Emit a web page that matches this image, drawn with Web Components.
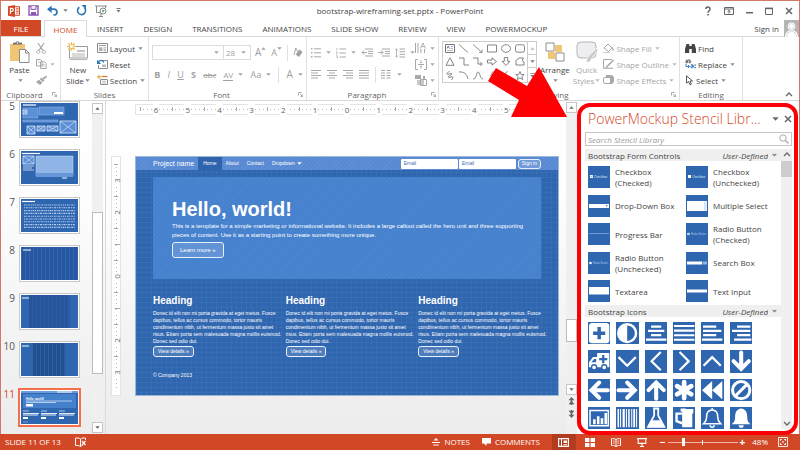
<!DOCTYPE html>
<html lang="en">
<head>
<meta charset="utf-8">
<title>bootstrap-wireframing-set.pptx - PowerPoint</title>
<style>
html,body{height:100%;margin:0}
body{font:8px/11px "Open Sans","Noto Sans",sans-serif;color:#444;background:#fff;overflow:hidden}
</style>
</head>
<body>
<app-window></app-window>
<script>
const CTRL = `
*{box-sizing:border-box}
button,select,input{font:inherit;color:inherit;background:none;border:0;margin:0;padding:0;border-radius:0;outline:0}
button{display:inline-flex;align-items:center;justify-content:center;white-space:nowrap}
a{color:inherit;text-decoration:none}
h1,h2,h3,p,ol,ul{margin:0;padding:0;font-weight:inherit;font-size:inherit;list-style:none}
`;
function define(name, css, html, setup) {
  customElements.define(name, class extends HTMLElement {
    constructor() { super(); this.attachShadow({mode: 'open'}); }
    connectedCallback() {
      if (this.shadowRoot.firstChild) return;
      const t = document.createElement('template');
      t.innerHTML = `<style>${CTRL}${css}</style>` + (typeof html === 'function' ? html(this) : html);
      this.shadowRoot.append(t.content.cloneNode(true));
      if (setup) setup(this, this.shadowRoot);
    }
  });
}

/* ---------- icons: [viewBox width, height, markup] ---------- */
const S = (d, w = 1, extra = '') => `<path d="${d}" fill="none" stroke="currentColor" stroke-width="${w}" ${extra}/>`;
const F = (d, f = 'currentColor') => `<path d="${d}" fill="${f}"/>`;
const ICONS = {
  ppt: [12,12, F('M0 1.2 7 0v12L0 10.8z','#d24726') + '<path d="M7 1.7h4.5v8.6H7" fill="#fff" stroke="#d24726"/><path d="M8 3.4h2.6M8 5h2.6M8 6.6h2.6M8 8.2h2.6" stroke="#d24726" stroke-width=".8"/><path d="M2.4 9V3.4h1.4a1.5 1.5 0 0 1 0 3H2.4" fill="none" stroke="#fff" stroke-width="1.1"/>'],
  save: [11,11, '<path d="M1 1h9v9H1z" fill="#fff" stroke="#8a55b5" stroke-width="1.4"/><path d="M3 1v3.4h5V1" fill="#f3eaf9" stroke="#8a55b5"/><path d="M3 10V7h5v3" fill="#8a55b5"/>'],
  undo: [12,11, S('M2 4.2h5a3 3 0 0 1 1 5.8L6.4 10',1.7) + F('M0 4.2 4.6.4v7.6z')],
  redo: [11,11, S('M3.4 2.2A4 4 0 1 0 8.6 3',1.6) + F('M5.5 0H10v4.6z')],
  show: [13,12, '<path d="M0 1h12M1.5 1v6.5h4M10.5 1v2" fill="none" stroke="#8a8a8a"/><path d="M6 8v3.5M4 11.5h4" stroke="#8a8a8a"/><circle cx="8" cy="6" r="3" fill="#fff" stroke="#7c8a80"/><path d="M7.2 4.4 9.8 6 7.2 7.6z" fill="#4c9a63"/>'],
  caret: [5,3, F('M.3.2h4.4L2.5 2.8z')],
  caretUp: [5,3, F('M.3 2.8h4.4L2.5.2z')],
  caretBig: [7,4, F('M.3.2h6.4L3.5 3.8z')],
  chevSmall: [5,4, S('M.7.8l1.800 1.900L4.300.8',1.100)],
  qat: [5,5, F('M.5 0h4v.9h-4zM.5 2h4L2.5 4.6z')],
  help: [8,10, S('M1.8 3a2.1 2.1 0 1 1 3.5 1.6C4.4 5.3 4 5.6 4 6.8',1.5) + F('M3.2 8h1.6v1.6H3.2z')],
  ribbonopt: [10,8, S('M.5.5h9v7h-9zM.5 2h9') + S('M5 6.6V3.6M3.5 4.8 5 3.4l1.5 1.4')],
  min: [7,8, F('M0 5h7v1.5H0z')],
  max: [8,8, S('M.5 1.5h7v6h-7z') + F('M0 .6h8v1.6H0z')],
  close: [8,8, S('M1 1l6 6M7 1 1 7',1.5)],
  avatar: [15,17, F('M0 0h15v17H0z','#b5b5b5') + '<circle cx="7.5" cy="6.400" r="3.800" fill="#fff"/><path d="M1 17c0-4 2-6 4.500-6.600h4C12 11 14 13 14 17z" fill="#fff"/><circle cx="7.500" cy="6.400" r="2.900" fill="#c9c9c9"/><path d="M2.400 17c0-3.500 1.600-5 3.600-5.400h3c2 .4 3.600 1.900 3.600 5.400z" fill="#c9c9c9"/><circle cx="7.500" cy="6.400" r="2.400" fill="#fff"/><path d="M3 17c0-3 1.400-4.500 3.400-5h2.200c2 .5 3.400 2 3.400 5z" fill="#fff"/>'],
  paste: [21,22, F('M1 3h15v17H1z','#f0c674') + F('M4 3.5h9V1.8h-2.4a2.2 2.2 0 0 0-4.2 0H4z','#6b6b6b') + '<circle cx="8.5" cy="1.9" r=".8" fill="#fff"/><path d="M10.5 8.5h6l3.5 3.5v9.5h-9.5z" fill="#fff" stroke="#8c8c8c"/><path d="M16.5 8.5V12H20" fill="none" stroke="#8c8c8c"/>'],
  cut: [10,11, S('M2 0l4.8 7.4M8 0 3.2 7.4',1.1) + S('M2.2 7.2a1.6 1.6 0 1 0 .1 0zM7.8 7.2a1.6 1.6 0 1 0 .1 0z')],
  copy: [11,10, '<path d="M.5.5h4L6 2v5H.5zM4.500 2.800h4l1.700 1.700v5H4.500z" fill="#fff" stroke="currentColor"/><path d="M6 5.500h2.600M6 7.200h2.600M2 3h2" stroke="currentColor" stroke-width=".7"/>'],
  brush: [11,10, F('M10.500.4 11 2 8 4.600 6.500 3z') + F('M5.600 2.500 8.500 5.600 6.800 7 3.800 4.200z') + F('M3 4.800 6.400 7.800 4 10 0 7z')],
  newslide: [21,20, '<path d="M2.500 4.500h18v11.500h-18z" fill="#fff" stroke="#9b9b9b"/><path d="M2.500 17.500h18" stroke="#b9b9b9"/><path d="M10 8h8v2h-8z" fill="#c4c4c4"/><path d="M5 12h13M5 14h13" stroke="#b5b5b5"/><path d="M4.500 0v9M0 4.500h9M1.300 1.300l6.400 6.400M7.700 1.300 1.300 7.700" stroke="#eebc5c" stroke-width="1.300"/><circle cx="4.500" cy="4.500" r="1.600" fill="#fff"/>'],
  layout: [11,10, '<path d="M.5.5h10v9H.5z" fill="#fff" stroke="#8c8c8c"/><path d="M2 2h7v1H2z" fill="#9a9a9a"/><path d="M2 4.300h3.500V8H2z" fill="#b0b0b0"/><path d="M6.500 4.800H9M6.500 6.300H9M6.500 7.800H9" stroke="#999" stroke-width=".8"/>'],
  reset: [11,10, '<path d="M3.500 1.500h7v8h-9V6" fill="#fff" stroke="#8c8c8c"/><path d="M5 5.500h4v2.500H5z" fill="#bbb"/><path d="M1 3.500C3 .5 5.500 1 7 3.500" fill="none" stroke="#2f76b5" stroke-width="1.300"/><path d="M0 .8v4.200h4.200z" fill="#2f76b5"/>'],
  section: [11,10, '<path d="M0 1.800h4M2 0v4" stroke="#e8b04c" stroke-width="1.200"/><path d="M4.500 1.500h6" stroke="#e07b39" stroke-width="1.300"/><path d="M3.500 4.500h7v5h-7z" fill="#fff" stroke="#8c8c8c"/><path d="M5 6.300h4M5 8h4" stroke="#aaa" stroke-width=".8"/>'],
  launcher: [5,5, S('M.5 3.500V.5h3M2 2l2.500 2.500M4.500 2.600v1.900H2.600',.8)],
  eraser: [10,10, S('M1 7 2.800 0 5 4',.9) + F('M6.500 1.500 9.500 4 6 9 2.600 6.500z')],
  bullets: [10,10, F('M0 0h1.500v1.500H0zM0 4h1.500v1.500H0zM0 8h1.500v1.500H0z') + S('M3 .8h7M3 4.800h7M3 8.800h7')],
  numbers: [10,10, S('M.8 0v2.200M0 4h1.500L0 5.800h1.500M0 7.800h1.500v2H0',.7) + S('M3.500 1h6.500M3.500 5h6.500M3.500 9h6.500')],
  outdent: [12,9, S('M4 1h8M7 3.400h5M7 5.600h5M4 8h8') + S('M1 4.500h5M3 2.500l-2 2 2 2')],
  indent: [12,9, S('M4 1h8M7 3.400h5M7 5.600h5M4 8h8') + S('M0 4.500h5M3 2.500l2 2-2 2')],
  spacing: [10,10, S('M4.500 1h5.500M4.500 3.700h5.500M4.500 6.300h5.500M4.500 9h5.500') + S('M1.500.8v8.400M0 2.500 1.500.8 3 2.500M0 7.500l1.500 1.700L3 7.500',.8)],
  left: [11,9, S('M0 .5h10M0 3h7M0 5.500h10M0 8h7')],
  center: [11,9, S('M0 .5h10M2 3h6M0 5.500h10M2 8h6')],
  right: [11,9, S('M0 .5h10M3 3h7M0 5.500h10M3 8h7')],
  justify: [11,9, S('M0 .5h10M0 3h10M0 5.500h10M0 8h10')],
  columns: [11,9, S('M0 .5h4M0 3h4M0 5.500h4M0 8h4M5.500.5h4M5.500 3h4M5.500 5.500h4M5.500 8h4')],
  textdir: [12,11, S('M.5 0v10M3 0v10M6 6v4M9.500 6v4') + S('M5.500 5.500 8 0l2.500 5.500M6.500 3.600h3',.9)],
  aligntext: [12,11, S('M3 .5H.5v10H3M9 .5h2.500v10H9M3 5.500h6') + S('M6 1v3M4.800 3 6 4.200 7.200 3M6 10V7M4.800 8 6 6.800 7.200 8',.8)],
  smartart: [12,11, F('M0 0h6v4H0z') + F('M2 5h7v5H2z','#c9c9c9') + S('M5.500 4.500h6v6h-6z') + F('M8 1h2v3H8z')],
  textbox: [10,9, '<path d="M.5.5h9v8h-9z" fill="#fff" stroke="#777"/><path d="M2 4.500 3.200 2l1.200 2.500" fill="none" stroke="#3f78b8" stroke-width=".9"/><path d="M5.500 2.500H8M5.500 4.500H8M2 6.500h6" stroke="#999" stroke-width=".7"/>'],
  line: [10,9, S('M0 .5l9 8',.8)], arrowline: [10,9, S('M0 .5l9 8M9 5.500v3H6',.8)],
  rect: [10,9, S('M.5 1h9v7h-9z',.9)], oval: [10,9, '<ellipse cx="5" cy="4.500" rx="4.500" ry="3.800" fill="none" stroke="currentColor" stroke-width=".9"/>'],
  rrect: [10,9, '<rect x=".5" y=".8" width="9" height="7.400" rx="1.800" fill="none" stroke="currentColor" stroke-width=".9"/>'],
  tri: [10,9, S('M5 .8 9 8.300H1z',.9)], elbow: [10,9, S('M0 1h5v7h5',.9)], elbowarrow: [10,9, S('M0 1h5v6h4M7.300 5 9.300 7l-2 2',.9)],
  rarrow: [10,9, S('M.5 3h4.500V.8l4.500 3.700L5 8.200V6H.5z',.9)], darrow: [10,9, S('M3.300.5h3.400v3.800h2.200L5 8.500 1.100 4.300h2.200z',.9)],
  pent: [10,9, S('M1 8V3.500L4 1h4.500L7 3.500 9 5v3z',.9)], scribble: [10,9, S('M4.500.5C1 2 1 4 4 3s4 0 1 1.500S3 7 6 6s2 1 .5 3',.9)],
  arc: [10,9, S('M0 1c5-.5 8 2 9 7',.9)], curve: [10,9, S('M0 8c4 0 3-7 5-7s2 7 5 7',.9)], star: [10,9, S('M5 .6l1.200 2.800 3 .2-2.300 2 .8 3L5 6.900 2.300 8.600l.8-3-2.300-2 3-.2z',.9)],
  brace: [10,9, S('M6.500.5C4 .5 5.500 4.500 3.500 4.500 5.500 4.500 4 8.500 6.500 8.500',.9)],
  more: [5,5, F('M.3 0h4.400v.8H.3zM.3 1.900h4.400L2.500 4.500z')],
  arrange: [20,20, F('M10 3h7v7h-7zM3 10h7v7H3z','#f0c674') + '<path d="M1 1h8v8H1zM11 11h8v8h-8z" fill="#fff" stroke="#8c8c8c"/>'],
  quick: [22,22, '<rect x="1" y="1" width="19" height="16" rx="4" fill="#eeedf1" stroke="#b4b4b8"/><path d="M21 7 12 15.500 10 21c3 1 5-.5 5.500-3.500L22 9z" fill="#c9c9cd" stroke="#fff" stroke-width=".7"/>'],
  fill: [11,10, S('M1 5l4-4 4 4-3.500 3.500z') + F('M8.800 3.500c2 1.500 2 3 1.400 5C9 8 9.600 6 8.800 3.500z') + F('M0 9h7v1H0z','#ccc')],
  outline: [11,10, S('M9 .5H.5v9H6') + S('M10.500 1 4 7.500 3 9',1.500) + F('M0 8.600h10v1.400H0z','#bbb')],
  effects: [11,10, F('M3 0h6l2 2v5L9 9H5L2 8z','#a9a9a9') + '<rect x=".5" y="2.500" width="7" height="6" rx="1.500" fill="#fff" stroke="#a9a9a9"/>'],
  find: [11,9, F('M1.500 0h2.800v2h2.400V0h2.800l1.500 5v4H6.800V5H4.200v4H0V5z')],
  replace: [11,10, '<path d="M.8 1.200h1.600v2.600H1a.9.9 0 0 1 0-1.500h1.400M4 0v3.800h1a1.200 1.200 0 0 0 0-2.300H4" fill="none" stroke="#555" stroke-width=".9"/><path d="M6 5.700h1.500v3H6.200a.9.9 0 0 1 0-1.600h1.300M11 6H9.400a1.400 1.400 0 0 0 0 2.700H11M1 5v2.500h3M3 6l1.500 1.500L3 9" fill="none" stroke="#2f6cb0" stroke-width=".9"/>'],
  select: [9,11, S('M1.500.8v7.400l2-1.700 1.500 3.300 1.300-.6L5 6h2.500z',.9)],
  chevUp: [8,5, S('M1 4l3-3 3 3',1.300)], chevDown: [8,5, S('M1 1l3 3 3-3',1.300)],
  dblUp: [7,8, F('M3.500 0 6.500 3.200H.5zM3.500 4 6.500 7.200H.5z') + F('M2.700 3h1.600v5H2.700z')],
  dblDown: [7,8, F('M3.500 8 .5 4.800h6zM3.500 4 .5.8h6z') + F('M2.700 0h1.600v5H2.700z')],
  mag: [10,10, '<circle cx="4" cy="4" r="3.200" fill="none" stroke="currentColor"/>' + S('M6.300 6.300l3.200 3.200',1.400)],
  spell: [11,10, S('M5.500 2C4 .8 2 .8.500 1v7.500c2-.2 3.500 0 5 1 .8-.6 1.500-.8 2-1M5.500 2v7.500M5.500 2C7 .8 9 .8 10.500 1v2') + S('M7 4l3.500 4M10.500 4 7 8',1.200)],
  notes: [8,8, F('M4 0l2.500 2.500h-5z') + S('M0 4.500h8M1.200 7h5.600',1.200)],
  comments: [9,8, F('M0 0h9v5.500H4.500V8L2 5.500H0z')],
  normal: [11,9, S('M.6.6h9.800v7.800H.6z',1.200) + F('M3 0h1v9H3z') + F('M5.500 2.500H9V5H5.500zM5.500 6.200H9v1H5.500z')],
  sorter: [10,9, F('M0 0h4.400v4H0zM5.600 0H10v4H5.600zM0 5h4.400v4H0zM5.600 5H10v4H5.600z')],
  reading: [10,9, S('M5 1.500C3.500.5 2 .5.500.8v6.700C2 7.300 3.500 7.500 5 8.500c1.500-1 3-1.200 4.500-1V.8C8 .5 6.500.5 5 1.500v7') + S('M1.800 3h2M1.800 5h2M6.300 3h2M6.300 5h2',.8)],
  slideshow: [10,9, S('M0 .6h10M1.200.6v4.800h7.600V.6M5 5.400v3M3 8.500h4',1.100)],
  fit: [10,10, S('M.5.5h9v9h-9z',.9) + F('M2 2h2.300L2 4.300zM8 2v2.300L5.700 2zM2 8V5.700L4.300 8zM8 8H5.700L8 5.700z') + F('M4.300 4.300h1.400v1.400H4.300z')],
  /* stencil glyphs, white on a blue tile */
  plusbox: [22,22, F('M4 1h14a3 3 0 0 1 3 3v14a3 3 0 0 1-3 3H4a3 3 0 0 1-3-3V4a3 3 0 0 1 3-3z','#fff') + '<path d="M11 5v12M5 11h12" stroke="#2f66b0" stroke-width="3.400"/>'],
  adjust: [22,22, '<circle cx="11" cy="11" r="8.800" fill="none" stroke="#fff" stroke-width="2.400"/><path d="M11 3a8 8 0 0 0 0 16z" fill="#fff"/>'],
  gcenter: [22,22, S('M6 4.500h10M3 8.700h16M6 12.900h10M1 17.300h20',2.200)],
  gjustify: [22,22, S('M1 4h20M1 8.500h20M1 13h20M1 17.500h20',2)],
  gleft: [22,22, S('M2 4.500h13M2 8.700h18M2 12.900h13M1 17.300h20',2.200)],
  gright: [22,22, S('M7 4.500h13M2 8.700h18M7 12.900h13M4 17.300h17',2.200)],
  ambulance: [22,22, '<path d="M9 3h12v14H1v-5l4-5h4z" fill="#fff"/><path d="M3.400 12 6 8.800h2V12z" fill="#2f66b0"/><path d="M15 5v8M11 9h8" stroke="#2f66b0" stroke-width="2.200"/><circle cx="6" cy="17" r="2.500" fill="#fff" stroke="#2f66b0" stroke-width="1.300"/><circle cx="16" cy="17" r="2.500" fill="#fff" stroke="#2f66b0" stroke-width="1.300"/>'],
  gdown: [22,22, S('M2.500 7 11 15.500 19.500 7',2.200)], gup: [22,22, S('M2.500 15.500 11 7l8.500 8.500',2.200)],
  gl: [22,22, S('M15.500 2 6.500 11l9 9',2.200)], gr: [22,22, S('M6.500 2l9 9-9 9',2.200)],
  adown: [22,22, S('M11 2.500v14M3.500 11l7.500 7.500 7.500-7.500',4,'stroke-linecap="round"')],
  aup: [22,22, S('M11 19.500v-14M3.500 11 11 3.500l7.500 7.500',4,'stroke-linecap="round"')],
  aleft: [22,22, S('M19.500 11h-14M11 3.500 3.500 11l7.500 7.500',4,'stroke-linecap="round"')],
  aright: [22,22, S('M2.500 11h14M11 3.500l7.500 7.500-7.500 7.500',4,'stroke-linecap="round"')],
  asterisk: [22,22, S('M11 3v16M4 7l14 8M18 7 4 15',4.600,'stroke-linecap="round"')],
  rewind: [22,22, F('M11 2v18L1 11zM21 2v18L11 11z')],
  ban: [22,22, '<circle cx="11" cy="11" r="8.500" fill="none" stroke="#fff" stroke-width="3"/>' + S('M17 5 5 17',3)],
  chart: [22,22, S('M2 3.500h18v15H2z',1.500) + F('M5 12h2.500v5H5zM8.800 9h2.500v8H8.800zM12.500 11H15v6h-2.500zM16.200 6h2.500v11h-2.500z')],
  barcode: [22,22, F('M1.500 2H3v18H1.500zM4 2h1v18H4zM6.500 2h2.200v18H6.500zM9.800 2h1v18h-1zM12 2h1.500v18H12zM15 2h1v18h-1zM17 2h1.800v18H17zM19.800 2h1v18h-1z')],
  flask: [22,22, S('M8 1.500h6M9 2v6.500L3 19.500h16L13 8.500V2',1.800) + F('M6.800 13h8.400l3.800 7H3z')],
  mug: [22,22, F('M9 2h11v4l-1 1v13H9z') + S('M9 6.500H3.500V14l5.500 2',2.400) + F('M7.500 1.500h5v3h-5z')],
  bello: [22,22, S('M11 3c-4 0-5.500 3-5.500 7 0 4-1.500 5-3 6.500h17C18 15 16.500 14 16.500 10c0-4-1.500-7-5.500-7z',1.500) + S('M9 18a2 2 0 0 0 4 0M11 1v2',1.500)],
  bell: [22,22, F('M11 1.500c-4.500.5-6 4-6 8.500s-1.500 5-3.500 7h19C18.500 15 17 14.500 17 10s-1.500-8-6-8.500z') + F('M8.500 18h5a2.500 2.500 0 0 1-5 0z')]
};
define('app-icon', ':host{display:inline-flex;flex:none}svg{display:block}:host([fluid]){display:flex}:host([fluid]) svg{width:100%;height:auto}',
  el => { const [w,h,m] = ICONS[el.getAttribute('name')]; return `<svg aria-hidden="true" width="${w}" height="${h}" viewBox="0 0 ${w} ${h}">${m}</svg>`; });
const I = n => `<app-icon name="${n}"></app-icon>`;

/* ---------- title bar and tabs ---------- */
define('title-bar', `
:host{display:grid;grid-template-columns:1fr auto 1fr;align-items:center;height:19px}
.q,.w{display:flex;align-items:center}.q{padding-left:7px;gap:8px}.w{justify-content:flex-end;gap:12px;padding-right:6px;color:#666}
.u{color:#2f76b5;gap:4px}.u i,.d{color:#777;display:flex}`, `
<div class="q">${I('ppt')}<button aria-label="Save">${I('save')}</button><button class="u" aria-label="Undo">${I('undo')}<i>${I('caret')}</i></button><button class="u" aria-label="Repeat">${I('redo')}</button><button aria-label="Start slide show">${I('show')}</button><button class="d" aria-label="Customize">${I('qat')}</button></div>
<span>bootstrap-wireframing-set.pptx - PowerPoint</span>
<div class="w"><button aria-label="Help">${I('help')}</button><button aria-label="Ribbon display options">${I('ribbonopt')}</button><button aria-label="Minimize">${I('min')}</button><button aria-label="Restore">${I('max')}</button><button aria-label="Close">${I('close')}</button></div>`);

define('tab-strip', `
:host{display:flex;height:17px;align-items:stretch;border-bottom:1px solid #d8d8d8;background:#fff}
nav{display:flex;align-items:stretch}
button{padding:0 10px}
.file{background:#d24726;color:#fff;width:40px;margin-right:3px}
.on{color:#d24726;border:1px solid #d8d8d8;border-bottom:0;width:43px;padding:0;margin-bottom:-1px;background:#fff}
.acct{margin-left:auto;display:flex;align-items:center;gap:5px}`, `
<nav><button class="file">FILE</button><button class="on">HOME</button><button>INSERT</button><button>DESIGN</button><button>TRANSITIONS</button><button>ANIMATIONS</button><button>SLIDE SHOW</button><button>REVIEW</button><button>VIEW</button><button>POWERMOCKUP</button></nav>
<div class="acct"><a href="#">Sign in</a>${I('avatar')}</div>`);

/* ---------- ribbon ---------- */
define('ribbon-group', `
:host{display:grid;grid-template-rows:1fr 12px;border-right:1px solid #e1e1e1;padding-top:3px;flex:none}
footer{display:flex;align-items:center;text-align:center;color:#666;white-space:nowrap}
footer span{flex:1}footer button{color:#999;width:12px}`,
  el => `<slot></slot><footer><span>${el.getAttribute('label')}</span>${el.hasAttribute('launcher') ? `<button aria-label="${el.getAttribute('label')} options">${I('launcher')}</button>` : ''}</footer>`);

define('ribbon-button', `
:host{display:block}button{gap:2px;height:16px}
:host([off]){color:#a6a6a6}i{display:flex;margin-left:1px;color:#888}
:host([big]) button{flex-direction:column;height:auto;gap:0;line-height:11px}
:host([big]) app-icon.main{height:24px;align-items:center}
:host([off]) i{color:#bbb}.l{display:flex;align-items:center;height:11px}`,
  el => {
    const c = el.hasAttribute('menu') ? `<i>${I('caret')}</i>` : '', t = el.getAttribute('text') || '', [a, b] = t.split('|');
    const icon = el.getAttribute('icon') ? `<app-icon class="main" name="${el.getAttribute('icon')}"></app-icon>` : '';
    return el.hasAttribute('big')
      ? `<button>${icon}<span>${a}</span><span class="l">${b || ''}${c}</span></button>`
      : `<button aria-label="${t || el.getAttribute('icon')}">${icon}${t ? `<span>${t}</span>` : ''}${c}</button>`;
  });
const B = (icon, text = '', attrs = '') => `<ribbon-button icon="${icon}" text="${text}" ${attrs}></ribbon-button>`;

define('font-tools', `
:host{display:flex;flex-direction:column;gap:7px;color:#a0a0a0;padding:5px 3px 0}
.r{display:flex;align-items:center;justify-content:space-between;height:15px}
label{position:relative;display:block;height:15px;border:1px solid #dcdcdc;margin-right:-1px}
label app-icon{position:absolute;right:4px;top:5px}
select{appearance:none;width:100%;height:13px;padding-left:2px;line-height:13px;color:#a0a0a0}
.f{width:72px}.s{width:28px}.r>button{font-size:9px}.g{width:1px;height:16px;background:#e0e0e0}
.fx{display:flex}.av{border-bottom:1px solid}.gap{gap:5px}.top{align-items:flex-start}
.big{font-size:10px}.r .abc{font-size:8px}`, `
<div class="r"><div class="fx"><label class="f"><select aria-label="Font"></select>${I('caret')}</label><label class="s"><select aria-label="Font size"><option>28</option></select>${I('caret')}</label></div>
<button class="top" aria-label="Grow font"><span class="big">A</span>${I('caretUp')}</button><button class="top" aria-label="Shrink font">A${I('caret')}</button><span class="g"></span><button aria-label="Clear formatting">${I('eraser')}</button></div>
<div class="r"><button><b>&nbsp;B</b></button><button><em>I</em></button><button><u>U</u></button><button><b>S</b></button><button class="abc"><s>abc</s></button><button class="gap"><span class="abc av">AV</span>${I('caret')}</button><button class="gap">Aa${I('caret')}</button><span class="g"></span><button class="gap"><span class="big">A</span>${I('caret')}</button></div>`);

define('paragraph-tools', `
:host{display:flex;justify-content:space-between;color:#a8a8a8;padding:0 4px}
.m{display:flex;flex-direction:column;gap:7px;padding-top:5px}
.r{display:flex;align-items:center;height:15px;gap:5px}.r button{gap:5px}
.v{display:flex;flex-direction:column;justify-content:space-between;padding:1px 0}.v button{gap:3px;height:14px}
.g{width:1px;height:16px;background:#e0e0e0}`, `
<div class="m"><div class="r">${['bullets','numbers'].map(n=>`<button aria-label="${n}">${I(n)}${I('caret')}</button>`).join('')}<button aria-label="Decrease indent">${I('outdent')}</button><button aria-label="Increase indent">${I('indent')}</button><button aria-label="Line spacing">${I('spacing')}${I('caret')}</button></div>
<div class="r">${['left','center','right','justify'].map(n=>`<button aria-label="Align ${n}">${I(n)}</button>`).join('')}<span class="g"></span><button aria-label="Columns">${I('columns')}${I('caret')}</button></div></div>
<div class="v">${['textdir','aligntext','smartart'].map(n=>`<button aria-label="${n}">${I(n)}${I('caret')}</button>`).join('')}</div>`);

define('shape-gallery', `
:host{display:flex;border:1px solid #ccc;width:95px;height:42px;color:#777}
.g{flex:1;display:grid;grid-template-columns:repeat(6,1fr);place-items:center}
.n{width:9px;border-left:1px solid #ccc;display:grid}.n button+button{border-top:1px solid #ccc}.n button:first-child{color:#bbb}`, `
<div class="g">${['textbox','line','arrowline','rect','oval','rrect','tri','elbow','elbowarrow','rarrow','darrow','pent','scribble','arc','curve','brace','brace','star'].map(n=>`<button aria-label="${n}">${I(n)}</button>`).join('')}</div>
<div class="n"><button aria-label="Previous row">${I('caretUp')}</button><button aria-label="Next row">${I('caret')}</button><button aria-label="More">${I('more')}</button></div>`);

define('ribbon-bar', `
:host{display:flex;height:64px;border-bottom:1px solid #d8d8d8;background:#fff}
.row{display:flex}.col{display:flex;flex-direction:column}
.clip{width:60px}.slides{width:88px}.font{width:158px}.par{width:132px}.draw{width:241px}.edit{width:63px}
.clip .row{padding-left:8px;gap:6px}.slides .row{padding-left:5px;gap:7px}.draw .row{padding-left:3px;gap:3px}.edit .col{padding-left:5px}
shape-gallery{margin-top:1px}
.end{flex:1;display:flex;align-items:flex-end;justify-content:flex-end;padding:0 6px 3px 0;color:#666}`, `
<ribbon-group class="clip" label="Clipboard" launcher><div class="row">${B('paste','Paste','big menu')}<div class="col">${B('cut','','off')}${B('copy','','off menu')}${B('brush','','off')}</div></div></ribbon-group>
<ribbon-group class="slides" label="Slides"><div class="row">${B('newslide','New|Slide','big menu')}<div class="col">${B('layout','Layout','menu')}${B('reset','Reset')}${B('section','Section','menu')}</div></div></ribbon-group>
<ribbon-group class="font" label="Font" launcher><font-tools></font-tools></ribbon-group>
<ribbon-group class="par" label="Paragraph" launcher><paragraph-tools></paragraph-tools></ribbon-group>
<ribbon-group class="draw" label="Drawing" launcher><div class="row"><shape-gallery></shape-gallery>${B('arrange','Arrange','big menu')}${B('quick','Quick|Styles','big menu off')}<div class="col">${B('fill','Shape Fill','menu off')}${B('outline','Shape Outline','menu off')}${B('effects','Shape Effects','menu off')}</div></div></ribbon-group>
<ribbon-group class="edit" label="Editing"><div class="col">${B('find','Find')}${B('replace','Replace','menu')}${B('select','Select','menu')}</div></ribbon-group>
<div class="end"><button aria-label="Collapse ribbon">${I('chevUp')}</button></div>`);

/* ---------- scroll bar: flex shares for the space before, in and after the thumb ---------- */
define('scroll-bar', `
:host{display:flex;flex-direction:column;width:11px;background:#f0f0f0;color:#666}
button{flex:none;height:11px;border:1px solid #c6c6c6;background:#fff}
.a{flex:var(--before,1)}.t{flex:var(--thumb,1);background:#fff;border:1px solid #bbb}.z{flex:var(--after,1)}
:host([flat]) button{border:0;background:none}:host([flat]) .t{background:#cdcdcd;border:0}`,
  el => { const f = el.hasAttribute('flat'); return `<button aria-label="Scroll up">${I(f ? 'chevUp' : 'caretUp')}</button><span class="a"></span><span class="t"></span><span class="z"></span><button aria-label="Scroll down">${I(f ? 'chevDown' : 'caret')}</button><slot></slot>`; });

/* ---------- slide thumbnails ---------- */
const bars = (x, n, step, w, c) => Array.from({length: n}, (_, i) => `<path d="M${x + i * step} 0h${w}v33h-${w}z" fill="${c}"/>`).join('');
const box = (x, y, w, h) => `<path d="M${x} ${y}h${w}v${h}h-${w}z" fill="#5b8fd6" stroke="#dbe8fa" stroke-width=".8"/><path d="M${x} ${y}l${w} ${h}M${x + w} ${y}l-${w} ${h}" stroke="#dbe8fa" stroke-width=".6"/>`;
const THUMBS = {
  5: '<path d="M2 2h13" stroke="#fff" stroke-width="1.200"/><path d="M2 5h15v10H2zM18 4h25v8H18zM2 17h35v2H2z" fill="#5b8fd6" stroke="#9dbfea" stroke-width=".5"/><path d="M33 9h9v2h-9z" fill="#fff"/>' + box(2,7,4,4) + box(6,23,8,8) + box(16,23,8,5) + box(26,23,11,5) + box(39,18,16,12),
  6: '<path d="M1 2.500h18" stroke="#fff" stroke-width="1.200"/>' + box(2,5,11,8) + '<path d="M2 15h11M2 17h9M2 19h11" stroke="#b9d0f2"/><path d="M15 5h37v20H15z" fill="#8fb4e6" stroke="#cfe0f7" stroke-width=".5"/><path d="M15 22h37v4H15z" fill="#6797d9"/><path d="M41 27h5" stroke="#fff"/>',
  7: '<path d="M1 2.500h13" stroke="#fff" stroke-width="1.200"/>' + Array.from({length: 9}, (_, i) => `<path d="M3 ${6 + i * 2.800}h51" stroke="#b9d0f2" stroke-width="1.100" stroke-dasharray="${i % 2 ? '1 .8 2 .9' : '1.600 .8 1 .9'}"/>`).join(''),
  8: bars(1, 14, 4, 3, '#2856a0') + '<path d="M2 3h8" stroke="#fff"/>',
  9: bars(8, 10, 4, 3, '#2856a0') + '<path d="M8 0h41v33H8z" fill="#24508f" opacity=".35"/><path d="M1 3h7" stroke="#fff"/>',
  10: bars(12, 8, 4, 3, '#24508f') + '<path d="M12 0h33v33H12z" fill="#24508f" opacity=".3"/><path d="M1 3h7" stroke="#fff"/>',
  11: '<path d="M0 0h57v2H0z" fill="#6d9cdc"/><path d="M36 .5h15v1H36z" fill="#fff"/><path d="M2 3h53v14H2z" fill="#4580cd"/><text x="5" y="9" fill="#fff" font-family="Liberation Sans,sans-serif" font-weight="700" font-size="3">Hello, world!</text><path d="M5 10h46M5 11.500h30M2 20h6M20 20h6M38 20h6" stroke="#cfe0f7" stroke-width=".8"/><path d="M5 13h7v2.500H5z" fill="#fff"/><path d="M2 22.500h16M20 22.500h16M38 22.500h16M2 24h15M20 24h15M38 24h15" stroke="#e3edfa" stroke-width="1"/><path d="M2 26h5v2H2zM20 26h5v2h-5zM38 26h5v2h-5z" fill="#fff"/><path d="M2 31h5" stroke="#9dbfea" stroke-width=".6"/>'
};
define('slide-thumb', `
:host{display:grid;grid-template-columns:14px 61px;gap:4px;height:35px}
span{font-size:10px;line-height:10px;text-align:right;color:#555}
div{border:1px solid #c8c8c8;padding:1px;background:#fff}svg{display:block;width:100%;height:100%;background:#2f66b0}
:host([current]) span{color:#d24726}:host([current]) div{border-color:#f3704b;outline:1px solid #f3704b}`,
  el => { const n = el.getAttribute('no'); return `<span>${n}</span><div><svg viewBox="0 0 57 33" preserveAspectRatio="none" role="img" aria-label="Slide ${n}">${THUMBS[n]}</svg></div>`; });
define('thumb-pane', `
:host{display:flex;width:105px;flex:none;border-right:1px solid #dadada;background:linear-gradient(#fff 0,#fdfdfd 30%,#ececec 100%)}
ol{flex:1;display:flex;flex-direction:column;gap:13px}
scroll-bar{margin:2px 2px 1px 0;--before:99;--thumb:162;--after:49}`, `
<ol>${[5,6,7,8,9,10,11].map(n => `<li><slide-thumb no="${n}" ${n === 11 ? 'current' : ''}></slide-thumb></li>`).join('')}</ol><scroll-bar></scroll-bar>`);

/* ---------- rulers ---------- */
define('ruler-bar', `
:host{display:flex;height:11px;box-sizing:border-box;border:1px solid #e4e4e4;background:#fff;padding:0 4px;color:#666;font-size:8px;line-height:9px}
span{flex:1;position:relative;text-align:center;background:repeating-linear-gradient(90deg,#fff 0 3px,#b5b5b5 3px 4px) 0 4px/100% 1px no-repeat}
span::before{content:"";position:absolute;left:0;top:2px;width:1px;height:4px;background:#aaa}
b{font-weight:400;background:#fff;padding:0 1px}
:host([vertical]){flex-direction:column;width:10px;height:auto;padding:7px 0}
:host([vertical]) span{display:grid;place-items:center;background:repeating-linear-gradient(#fff 0 3px,#b5b5b5 3px 4px) 4px 0/1px 100% no-repeat}
:host([vertical]) span::before{left:2px;top:0;width:4px;height:1px}
:host([vertical]) b{transform:rotate(-90deg);line-height:7px}`,
  el => { const m = +el.getAttribute('max'); return Array.from({length: 2 * m + 1}, (_, i) => `<span><b>${Math.abs(i - m)}</b></span>`).join(''); });

/* ---------- the slide ---------- */
define('wire-button', `:host{display:inline-flex}button{border:1px solid #e8f0fb;border-radius:3px;color:#fff;background:rgba(255,255,255,.14);padding:0 var(--pad,4px);height:var(--h,11px)}`, '<button><slot></slot></button>');
define('wire-column', `:host{display:block;font-size:5px;line-height:7px;white-space:nowrap}h2{font-size:10px;line-height:12px;font-weight:700;margin-bottom:3px}wire-button{margin-top:1px;font-size:5px}`, `
<h2>Heading</h2><p>Donec id elit non mi porta gravida at eget metus. Fusce<br>dapibus, tellus ac cursus commodo, tortor mauris<br>condimentum nibh, ut fermentum massa justo sit amet<br>risus. Etiam porta sem malesuada magna mollis euismod.<br>Donec sed odio dui.</p><wire-button>View details »</wire-button>`);
define('slide-view', `
:host{display:flex;flex-direction:column;min-width:0;color:#fff;font-family:"Liberation Sans",Arial,sans-serif;border:1px solid #9db7da;box-sizing:border-box;
background:repeating-linear-gradient(90deg,rgba(255,255,255,.04) 0 1px,transparent 1px 5px),repeating-linear-gradient(rgba(255,255,255,.04) 0 1px,transparent 1px 5px),#2f66b0}
header{display:flex;align-items:center;height:13px;padding:0 17px;font-size:5px;background:repeating-linear-gradient(135deg,rgba(255,255,255,.05) 0 1px,transparent 1px 3px),#5989d2}
header strong{font-size:7px;font-weight:400;margin-right:4px}
header a{padding:0 4px;height:13px;line-height:13px;display:flex;align-items:center;gap:2px}header a.on{background:#2e64ae;padding:0 5px}
form{display:flex;gap:1px;margin-left:auto}input{width:57px;height:10px;background:#fff;color:#3c6fb8;padding:0 3px;border-radius:1px}
form wire-button{margin-left:1px;--pad:3px;--h:10px}
.hero{margin:7px 17px 0;padding:21px 19px 21px;background:repeating-linear-gradient(135deg,rgba(255,255,255,.03) 0 1px,transparent 1px 3px),#4681ce;font-size:6px;line-height:9px;white-space:nowrap;border-radius:1px}
h1{font-size:20px;line-height:22px;font-weight:700;margin-bottom:2px}.hero wire-button{--h:16px;--pad:7px;margin-top:2px}
.cols{display:grid;grid-template-columns:repeat(3,minmax(0,1fr));gap:16px;padding:16px 23px 0 17px}
footer{padding:13px 17px 0;font-size:5px}`, `
<header><strong>Project name</strong><a class="on" href="#">Home</a><a href="#">About</a><a href="#">Contact</a><a href="#">Dropdown ${I('caret')}</a>
<form><input aria-label="Email" value="Email"><input aria-label="Password" value="Email"><wire-button>Sign in</wire-button></form></header>
<section class="hero"><h1>Hello, world!</h1><p>This is a template for a simple marketing or informational website. It includes a large callout called the hero unit and three supporting<br>pieces of content. Use it as a starting point to create something more unique.</p><wire-button>Learn more »</wire-button></section>
<div class="cols"><wire-column></wire-column><wire-column></wire-column><wire-column></wire-column></div>
<footer>© Company 2013</footer>`);

define('slide-editor', `
:host{flex:1;display:grid;grid-template-columns:10px minmax(0,1fr) 11px;grid-template-rows:11px 1fr;min-width:0;padding:3px 0 0 5px;background:linear-gradient(#fff 0,#fdfdfd 30%,#ececec 100%)}
.h{grid-column:2;margin:0 7px 0 14px;min-width:0}.v{margin-top:41px;height:240px}
slide-view{margin:41px 7px 0 14px;height:240px}
scroll-bar{grid-column:3;grid-row:1/3;margin-top:-2px;--before:207;--thumb:21;--after:42}
.p{display:flex;flex-direction:column;gap:1px;padding-bottom:14px;background:#f0f0f0}.p button{border:0}
button{height:12px}`, `
<ruler-bar class="h" max="6"></ruler-bar><ruler-bar class="v" vertical max="3"></ruler-bar><slide-view></slide-view>
<scroll-bar><div class="p"><button aria-label="Previous slide">${I('dblUp')}</button><button aria-label="Next slide">${I('dblDown')}</button></div></scroll-bar>`);

/* ---------- stencil task pane ---------- */
const MINI = {
  check: '<path d="M2 9h3v3H2z" fill="#fff"/><path d="M2.700 10.300l.8.9 1.200-1.600" stroke="#2f66b0" stroke-width=".6" fill="none"/><text x="6" y="12.200" fill="#dbe7f8" font-size="3" font-family="Liberation Sans,sans-serif">Checkbox</text>',
  uncheck: '<path d="M2 9h3v3H2z" fill="#fff"/><text x="6" y="12.200" fill="#dbe7f8" font-size="3" font-family="Liberation Sans,sans-serif">Checkbox</text>',
  drop: '<path d="M1 9h20v4H1z" fill="#fff"/><path d="M17.500 10.300h2.400l-1.200 1.500z" fill="#2f66b0"/>',
  multi: '<path d="M1 6h20v10H1z" fill="#fff"/><path d="M18 6.500h2.500v9H18z" fill="#dbe4f1"/>',
  bar: '<path d="M1 10.500h20" stroke="#6f9bd8" stroke-width="1"/>',
  radio: '<circle cx="2.500" cy="11" r="1.300" fill="#fff"/><circle cx="2.500" cy="11" r=".5" fill="#2f66b0"/><text x="5" y="12" fill="#a9c5ec" font-size="2.600" font-family="Liberation Sans,sans-serif">Radio Button</text>',
  unradio: '<circle cx="2.500" cy="11" r="1.300" fill="#fff"/><text x="5" y="12" fill="#a9c5ec" font-size="2.600" font-family="Liberation Sans,sans-serif">Radio Button</text>',
  search: '<path d="M1 9.500h15v3H1z" fill="#fff"/><path d="M16.500 9.500H21v3h-4.500z" fill="#8fb4e6"/>',
  area: '<path d="M1 7h20v7.500H1z" fill="#fff"/>', input: '<path d="M1 9.500h20v3H1z" fill="#fff"/>'
};
define('stencil-item', `:host{display:flex;align-items:center;gap:5px;line-height:11px}svg{width:22px;height:22px;flex:none;background:#2f66b0}`,
  el => `<svg viewBox="0 0 22 22" aria-hidden="true">${MINI[el.getAttribute('kind')]}</svg><span><slot></slot></span>`);
define('stencil-section', `
:host{display:block}header{display:flex;justify-content:space-between;align-items:center;height:12px;background:#efefef;padding:0 4px 0 3px}
select{appearance:none;font-style:italic;text-align:right;height:11px}label{display:flex;align-items:center;gap:4px}label app-icon{color:#777}`,
  el => `<header><h3>${el.getAttribute('label')}</h3><label><select aria-label="Order"><option>User-Defined</option></select>${I('chevSmall')}</label></header><slot></slot>`);
define('stencil-pane', `
:host{display:flex;flex-direction:column;width:222px;box-sizing:border-box;flex:none;padding:5px 7px 5px 8px;position:relative;background:#fff}
:host::after{content:"";position:absolute;inset:2px 1px -1px 0;border:4px solid #fb0007;border-radius:13px;pointer-events:none}
.t{display:flex;align-items:center;height:26px;color:#666}h2{flex:1;font-size:14px;line-height:20px;font-weight:300;color:#d24726;white-space:nowrap;padding-left:3px}
.t button+button{margin-left:5px}
.s{display:flex;align-items:center;height:14px;border:1px solid #c6c6c6;padding:0 2px;color:#aaa}.s input{flex:1;font-style:italic;color:#999}.s input::placeholder{color:#999;opacity:1}
.b{flex:1;display:flex;margin-top:3px;min-height:0}.l{flex:1;overflow:hidden}
.f{display:grid;grid-template-columns:98px 1fr;align-content:space-between;height:136px;margin:5px 0 3px 3px}
.g{display:grid;grid-template-columns:repeat(6,1fr);gap:6px;width:164px;margin:5px 0 0 3px}.g button{background:#2f66b0;color:#fff;display:block}
scroll-bar{--before:1;--thumb:16;--after:240}`, `
<div class="t"><h2>PowerMockup Stencil Libr...</h2><button aria-label="Pane options">${I('caretBig')}</button><button aria-label="Close pane">${I('close')}</button></div>
<div class="s"><input type="search" aria-label="Search Stencil Library" placeholder="Search Stencil Library">${I('mag')}</div>
<div class="b"><div class="l">
<stencil-section label="Bootstrap Form Controls"><div class="f">
<stencil-item kind="check">Checkbox<br>(Checked)</stencil-item><stencil-item kind="uncheck">Checkbox<br>(Unchecked)</stencil-item>
<stencil-item kind="drop">Drop-Down Box</stencil-item><stencil-item kind="multi">Multiple Select</stencil-item>
<stencil-item kind="bar">Progress Bar</stencil-item><stencil-item kind="radio">Radio Button<br>(Checked)</stencil-item>
<stencil-item kind="unradio">Radio Button<br>(Unchecked)</stencil-item><stencil-item kind="search">Search Box</stencil-item>
<stencil-item kind="area">Textarea</stencil-item><stencil-item kind="input">Text Input</stencil-item></div></stencil-section>
<stencil-section label="Bootstrap Icons"><div class="g">${['plusbox','adjust','gcenter','gjustify','gleft','gright','ambulance','gdown','gl','gr','gup','adown','aleft','aright','aup','asterisk','rewind','ban','chart','barcode','flask','mug','bello','bell'].map(n => `<button aria-label="${n}"><app-icon fluid name="${n}"></app-icon></button>`).join('')}</div></stencil-section>
</div><scroll-bar flat></scroll-bar></div>`);

/* ---------- status bar ---------- */
define('status-bar', `
:host{display:flex;align-items:center;height:16px;box-sizing:border-box;flex:none;background:#d24726;color:#fff;padding-left:5px}
.t{padding-bottom:1px}
.sp{margin-left:14px}.r{margin-left:auto;display:flex;align-items:center;align-self:stretch}
.n{gap:4px;margin-right:12px;padding-bottom:1px}.v{width:24px;height:100%;margin-right:2px}.v.on{background:#b13c20}
input{appearance:none;width:70px;height:8px;margin:0 2px;background:linear-gradient(#fff,#fff) 50% 50%/1px 5px no-repeat,linear-gradient(#f0b5a6,#f0b5a6) 0 50%/100% 1px no-repeat}
input::-webkit-slider-thumb{appearance:none;width:3px;height:8px;background:#fff}
.z{font-size:10px}.out{margin-left:4px}.p{margin:0 10px 0 7px}.e{margin-right:12px}`, `
<span class="t">SLIDE 11 OF 13</span><button class="sp" aria-label="Spelling">${I('spell')}</button>
<div class="r"><button class="n">${I('notes')}NOTES</button><button class="n">${I('comments')}COMMENTS</button>
<button class="v on" aria-label="Normal">${I('normal')}</button><button class="v" aria-label="Slide sorter">${I('sorter')}</button><button class="v" aria-label="Reading view">${I('reading')}</button><button class="v" aria-label="Slide show">${I('slideshow')}</button>
<button class="z out" aria-label="Zoom out"><b>−</b></button><input type="range" aria-label="Zoom" min="10" max="190" value="48"><button class="z" aria-label="Zoom in"><b>+</b></button><span class="p t">48%</span><button class="e" aria-label="Fit to window">${I('fit')}</button></div>`);

define('app-window', `
:host{display:flex;flex-direction:column;height:100vh;position:relative}
.frame{flex:1;display:flex;flex-direction:column;min-height:0;border:1px solid #cf7a67;border-bottom:0}
main{flex:1;display:flex;min-height:0}
.arrow{position:absolute;left:480px;top:60px;pointer-events:none}`, `
<div class="frame"><title-bar></title-bar><tab-strip></tab-strip><ribbon-bar></ribbon-bar>
<main><thumb-pane></thumb-pane><slide-editor></slide-editor><stencil-pane></stencil-pane></main></div>
<status-bar></status-bar>
<svg class="arrow" width="90" height="60" viewBox="0 0 90 60" aria-hidden="true"><path d="M16 8 47 26 59 7 87 57H31l8-17L8 21z" fill="#fd0004"/></svg>`);
</script>
</body>
</html>
